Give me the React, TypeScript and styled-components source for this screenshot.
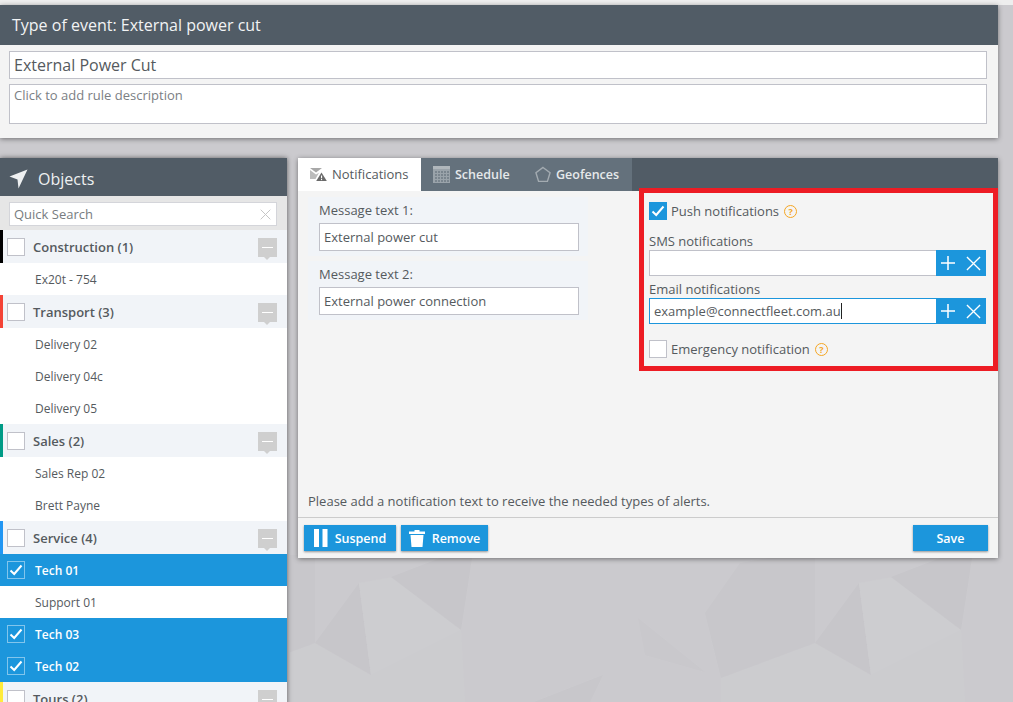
import React from 'react';
import styled, { createGlobalStyle } from 'styled-components';

const blue = '#1c96dc';
const darkHeader = '#515c66';
const textGray = '#555a5e';
const fieldBorder = '#c0c1c9';

const GlobalStyle = createGlobalStyle`
  html, body {
    margin: 0;
    height: 100%;
    overflow: hidden;
    background: #cbcace;
    font-family: "Open Sans", "Liberation Sans", sans-serif;
    color: ${textGray};
  }
  * {
    box-sizing: border-box;
  }
`;

const Page = styled.div`
  position: relative;
  display: flex;
  flex-direction: column;
  height: 702px;
  overflow: hidden;
`;

const Backdrop = styled.svg`
  position: absolute;
  left: 0;
  top: 0;
  width: 100%;
  height: 100%;
`;

const TopStrip = styled.div`
  position: relative;
  height: 5px;
  flex: none;
  background: #eeeeee;
`;

const EventCard = styled.section`
  position: relative;
  flex: none;
  width: 998px;
  background: #f4f4f4;
  box-shadow: 0 1px 5px rgba(0, 0, 0, 0.45);
`;

const EventHeader = styled.h1`
  margin: 0;
  height: 40px;
  padding: 0 12px;
  display: flex;
  align-items: center;
  background: ${darkHeader};
  color: #f1f3f4;
  font-size: 16px;
  font-weight: 400;
`;

const EventFields = styled.div`
  display: flex;
  flex-direction: column;
  gap: 5px;
  padding: 6px 11px 14px 9px;
`;

const TitleInput = styled.input`
  height: 28px;
  padding: 0 4px;
  border: 1px solid ${fieldBorder};
  background: #fff;
  color: ${textGray};
  font: 16px "Open Sans", sans-serif;
  outline: none;
`;

const DescriptionArea = styled.div`
  height: 40px;
  padding: 1px 4px;
  border: 1px solid ${fieldBorder};
  background: #fff;
  color: #7b8084;
  font-size: 13px;
  line-height: 18px;
`;

const Main = styled.div`
  position: relative;
  flex: 1;
  min-height: 0;
  display: flex;
  align-items: flex-start;
  gap: 11px;
  margin-top: 20px;
`;

const ObjectsPanel = styled.aside`
  flex: none;
  width: 287px;
  height: 560px;
  background: #fff;
  box-shadow: 0 0 5px rgba(0, 0, 0, 0.55);
  overflow: hidden;
`;

const ObjectsHeader = styled.div`
  height: 38px;
  display: flex;
  align-items: center;
  gap: 10px;
  padding: 3px 0 0 9px;
  background: ${darkHeader};
  color: #eef0f1;
  font-size: 16px;
  font-weight: 400;
`;

const SearchBar = styled.div`
  height: 34px;
  padding: 6px 10px 4px 9px;
  background: #e6e6e6;
`;

const SearchBox = styled.div`
  height: 24px;
  padding: 0 5px 0 4px;
  display: flex;
  align-items: center;
  justify-content: space-between;
  border: 1px solid #d4d5da;
  background: #fff;
  color: #777c80;
  font-size: 13px;
`;

const GroupRow = styled.div<{ $color: string }>`
  height: 33px;
  display: flex;
  align-items: center;
  gap: 8px;
  padding: 1px 10px 0 4px;
  border-left: 3px solid ${(props) => props.$color};
  background: #f1f4f8;
  font-size: 13px;
  font-weight: 600;
`;

const GroupName = styled.span`
  flex: 1;
`;

const CollapseButton = styled.span`
  position: relative;
  width: 19px;
  height: 19px;
  background: #cfcfcf;
  &::before {
    content: '';
    position: absolute;
    left: 4px;
    right: 4px;
    top: 9px;
    height: 1px;
    background: #fff;
  }
  &::after {
    content: '';
    position: absolute;
    left: 6px;
    top: 19px;
    border: 3.5px solid transparent;
    border-top-color: #cfcfcf;
    border-bottom: 0;
  }
`;

const ItemRow = styled.div<{ $selected?: boolean }>`
  height: 32px;
  display: flex;
  align-items: center;
  gap: 10px;
  padding-left: 7px;
  background: ${(props) => (props.$selected ? blue : '#fff')};
  color: ${(props) => (props.$selected ? '#fff' : textGray)};
  font-size: 12px;
  font-weight: ${(props) => (props.$selected ? 600 : 400)};
`;

const ItemSpacer = styled.span`
  width: 18px;
`;

const CheckBox = styled.span<{ $checked?: boolean; $onBlue?: boolean }>`
  flex: none;
  width: 18px;
  height: 18px;
  display: flex;
  align-items: center;
  justify-content: center;
  border: 1px solid ${(props) => (props.$onBlue ? 'rgba(255, 255, 255, 0.45)' : props.$checked ? blue : fieldBorder)};
  background: ${(props) => (props.$onBlue ? 'transparent' : props.$checked ? blue : '#fff')};
`;

const RulePanel = styled.section`
  flex: none;
  width: 700px;
  height: 400px;
  display: flex;
  flex-direction: column;
  background: #f4f4f4;
  box-shadow: 0 1px 5px rgba(0, 0, 0, 0.45);
`;

const TabBar = styled.div`
  flex: none;
  height: 33px;
  display: flex;
  background: ${darkHeader};
`;

const Tab = styled.div<{ $active?: boolean; $width: number }>`
  width: ${(props) => props.$width}px;
  display: flex;
  align-items: center;
  gap: 5px;
  padding: 0 0 ${(props) => (props.$active ? 1 : 0)}px 12px;
  background: ${(props) => (props.$active ? '#fff' : '#64717c')};
  color: ${(props) => (props.$active ? textGray : '#e6e9eb')};
  font-size: ${(props) => (props.$active ? 13 : 12.5)}px;
  font-weight: ${(props) => (props.$active ? 400 : 600)};
`;

const Content = styled.div`
  flex: 1;
  min-height: 0;
  display: flex;
`;

const MessageColumn = styled.div`
  flex: none;
  width: 341px;
  display: flex;
  flex-direction: column;
  gap: 5px;
  padding: 6px 0 0 10px;
`;

const MessageBlock = styled.div`
  width: 280px;
  padding: 4px 9px 5px 11px;
  background: #f1f4f8;
`;

const FieldLabel = styled.label`
  display: block;
  font-size: 13px;
  line-height: 18px;
`;

const MessageLabel = styled(FieldLabel)`
  margin-bottom: 4px;
`;

const MessageInput = styled.input`
  display: block;
  width: 100%;
  height: 28px;
  padding: 0 4px;
  border: 1px solid ${fieldBorder};
  background: #fff;
  color: ${textGray};
  font: 13px "Open Sans", sans-serif;
  outline: none;
`;

const HighlightBox = styled.div`
  flex: none;
  width: 359px;
  height: 183px;
  margin-top: -3px;
  padding: 9px 7px 0 5px;
  border: 5px solid #ed1c24;
`;

const CheckRow = styled.div<{ $top?: number }>`
  height: 18px;
  margin-top: ${(props) => props.$top ?? 0}px;
  display: flex;
  align-items: center;
  gap: 4px;
  font-size: 13px;
`;

const HelpMark = styled.span`
  width: 13px;
  height: 13px;
  margin-left: 1px;
  display: flex;
  align-items: center;
  justify-content: center;
  border: 1.5px solid #f5a623;
  border-radius: 50%;
  color: #f5a623;
  font-size: 9px;
  font-weight: 700;
`;

const NotifyLabel = styled(FieldLabel)<{ $top: number }>`
  margin-top: ${(props) => props.$top}px;
`;

const NotifyField = styled.div`
  height: 26px;
  display: flex;
`;

const NotifyText = styled.div<{ $focused?: boolean }>`
  flex: 1;
  display: flex;
  align-items: center;
  padding: 0 4px;
  border: 1px solid ${(props) => (props.$focused ? blue : fieldBorder)};
  border-right: 0;
  background: #fff;
  color: ${textGray};
  font-size: 13px;
`;

const Caret = styled.span`
  width: 1px;
  height: 16px;
  background: #222;
`;

const FieldActions = styled.div`
  flex: none;
  width: 50px;
  display: flex;
  align-items: center;
  gap: 10px;
  padding-left: 4px;
  background: ${blue};
`;

const Note = styled.p`
  flex: none;
  margin: 0 0 7px;
  padding-left: 10px;
  font-size: 13px;
  line-height: 18px;
`;

const Footer = styled.footer`
  flex: none;
  height: 41px;
  display: flex;
  align-items: center;
  gap: 5px;
  padding: 0 10px 0 6px;
  border-top: 1px solid #cccccc;
`;

const ActionButton = styled.button<{ $push?: boolean; $width: number }>`
  width: ${(props) => props.$width}px;
  height: 26px;
  margin-left: ${(props) => (props.$push ? 'auto' : 0)};
  display: flex;
  align-items: center;
  justify-content: center;
  gap: 7px;
  padding: 0;
  border: 0;
  background: ${blue};
  box-shadow: 0 1px 2px rgba(0, 0, 0, 0.4);
  color: #fff;
  font: 600 12.5px "Open Sans", sans-serif;
`;

const Check = ({ size = 14 }: { size?: number }) => (
  <svg width={size} height={size} viewBox="0 0 14 14" fill="none">
    <path d="M1.5 7.5 L5.2 11 L12.5 2.5" stroke="#fff" strokeWidth="2" />
  </svg>
);

const Cross = ({ size, color }: { size: number; color: string }) => (
  <svg width={size} height={size} viewBox="0 0 16 16" fill="none">
    <path d="M1 1 L15 15 M15 1 L1 15" stroke={color} strokeWidth="1.4" />
  </svg>
);

const Plus = () => (
  <svg width="16" height="16" viewBox="0 0 16 16" fill="none">
    <path d="M8 1 V15 M1 8 H15" stroke="#fff" strokeWidth="1.5" />
  </svg>
);

const NavArrow = () => (
  <svg width="19" height="20" viewBox="0 0 19 20">
    <path d="M18.5 0.5 L0.5 7.5 L8.5 10.5 L9.5 19.5 Z" fill="#eef0f1" />
  </svg>
);

const NotificationIcon = () => (
  <svg width="17" height="13" viewBox="0 0 17 13">
    <path d="M0 0 H12 L6 4.5 Z" fill="#a8a8a8" />
    <path d="M0 2 L6 6.5 L9 4.8 L5.5 11 H0 Z" fill="#bcbcbc" />
    <path d="M11.5 4.5 L16.8 13 H6.2 Z" fill="#6a6a6a" />
    <rect x="11" y="7.5" width="1.1" height="2.8" fill="#fff" />
    <rect x="11" y="11" width="1.1" height="1.1" fill="#fff" />
  </svg>
);

const CalendarIcon = () => (
  <svg width="17" height="17" viewBox="0 0 17 17">
    <rect width="17" height="17" fill="#9aa3aa" />
    <rect y="0" width="17" height="3" fill="#b0b7bc" />
    {[2, 5, 8, 11, 14].map((x) =>
      [5, 8, 11, 14].map((y) => <rect key={`${x}-${y}`} x={x} y={y} width="2" height="2" fill="#7a858e" />)
    )}
  </svg>
);

const PentagonIcon = () => (
  <svg width="16" height="17" viewBox="0 0 17 17" fill="none">
    <path d="M8.5 1 L16 6.6 L13.2 15.8 H3.8 L1 6.6 Z" stroke="#a3abb1" strokeWidth="1.5" />
  </svg>
);

const PauseIcon = () => (
  <svg width="14" height="18" viewBox="0 0 14 18">
    <rect x="0" width="5" height="18" fill="#fff" />
    <rect x="8.5" width="5" height="18" fill="#fff" />
  </svg>
);

const TrashIcon = () => (
  <svg width="16" height="17" viewBox="0 0 16 17">
    <path d="M5.5 1.5 V0 H10.5 V1.5 H16 V4 H0 V1.5 Z" fill="#fff" />
    <path d="M1.5 5 H14.5 L13.5 17 H2.5 Z" fill="#fff" />
  </svg>
);

interface ObjectGroup {
  name: string;
  color: string;
  items: { label: string; selected?: boolean }[];
}

const groups: ObjectGroup[] = [
  { name: 'Construction (1)', color: '#000000', items: [{ label: 'Ex20t - 754' }] },
  { name: 'Transport (3)', color: '#f44336', items: [{ label: 'Delivery 02' }, { label: 'Delivery 04c' }, { label: 'Delivery 05' }] },
  { name: 'Sales (2)', color: '#009b86', items: [{ label: 'Sales Rep 02' }, { label: 'Brett Payne' }] },
  {
    name: 'Service (4)',
    color: '#2196f3',
    items: [
      { label: 'Tech 01', selected: true },
      { label: 'Support 01' },
      { label: 'Tech 03', selected: true },
      { label: 'Tech 02', selected: true },
    ],
  },
  { name: 'Tours (2)', color: '#ffeb3b', items: [] },
];

const App: React.FC = () => (
  <Page>
    <GlobalStyle />
    <Backdrop viewBox="0 0 1013 702" preserveAspectRatio="none">
      <defs>
        <pattern id="facets" x="315" y="500" width="500" height="300" patternUnits="userSpaceOnUse">
          <path d="M0 143 L56 175 L146 130 L150 202 H0 Z" fill="#cccccf" />
          <path d="M406 178 L500 143 V202 H406 Z" fill="#cccccf" />
          <path d="M0 143 L44 83 L56 175 Z" fill="#c7c6ca" />
          <path d="M44 83 L79 77 L146 130 L56 175 Z" fill="#cdcdd0" />
          <path d="M76 77 L159 45 L146 130 Z" fill="#c7c6ca" />
          <path d="M390 113 L425 63 L500 50 V143 L406 178 Z" fill="#c8c7cb" />
          <path d="M323 118 L390 172 L330 155 Z" fill="#c9c8cc" />
          <path d="M288 175 L219 202 L275 202 Z" fill="#c8c7cb" />
        </pattern>
      </defs>
      <rect x="290" y="555" width="723" height="147" fill="url(#facets)" />
    </Backdrop>
    <TopStrip />
    <EventCard>
      <EventHeader>Type of event: External power cut</EventHeader>
      <EventFields>
        <TitleInput defaultValue="External Power Cut" />
        <DescriptionArea>Click to add rule description</DescriptionArea>
      </EventFields>
    </EventCard>
    <Main>
      <ObjectsPanel>
        <ObjectsHeader>
          <NavArrow />
          Objects
        </ObjectsHeader>
        <SearchBar>
          <SearchBox>
            Quick Search
            <Cross size={11} color="#c4c4c4" />
          </SearchBox>
        </SearchBar>
        {groups.map((group) => (
          <React.Fragment key={group.name}>
            <GroupRow $color={group.color}>
              <CheckBox />
              <GroupName>{group.name}</GroupName>
              <CollapseButton />
            </GroupRow>
            {group.items.map((item) => (
              <ItemRow key={item.label} $selected={item.selected}>
                {item.selected ? (
                  <CheckBox $checked $onBlue>
                    <Check />
                  </CheckBox>
                ) : (
                  <ItemSpacer />
                )}
                {item.label}
              </ItemRow>
            ))}
          </React.Fragment>
        ))}
      </ObjectsPanel>
      <RulePanel>
        <TabBar>
          <Tab $active $width={123}>
            <NotificationIcon />
            Notifications
          </Tab>
          <Tab $width={102}>
            <CalendarIcon />
            Schedule
          </Tab>
          <Tab $width={109}>
            <PentagonIcon />
            Geofences
          </Tab>
        </TabBar>
        <Content>
          <MessageColumn>
            <MessageBlock>
              <MessageLabel>Message text 1:</MessageLabel>
              <MessageInput defaultValue="External power cut" />
            </MessageBlock>
            <MessageBlock>
              <MessageLabel>Message text 2:</MessageLabel>
              <MessageInput defaultValue="External power connection" />
            </MessageBlock>
          </MessageColumn>
          <HighlightBox>
            <CheckRow>
              <CheckBox $checked>
                <Check />
              </CheckBox>
              Push notifications
              <HelpMark>?</HelpMark>
            </CheckRow>
            <NotifyLabel $top={12}>SMS notifications</NotifyLabel>
            <NotifyField>
              <NotifyText />
              <FieldActions>
                <Plus />
                <Cross size={15} color="#fff" />
              </FieldActions>
            </NotifyField>
            <NotifyLabel $top={4}>Email notifications</NotifyLabel>
            <NotifyField>
              <NotifyText $focused>
                example@connectfleet.com.au
                <Caret />
              </NotifyText>
              <FieldActions>
                <Plus />
                <Cross size={15} color="#fff" />
              </FieldActions>
            </NotifyField>
            <CheckRow $top={16}>
              <CheckBox />
              Emergency notification
              <HelpMark>?</HelpMark>
            </CheckRow>
          </HighlightBox>
        </Content>
        <Note>Please add a notification text to receive the needed types of alerts.</Note>
        <Footer>
          <ActionButton $width={92}>
            <PauseIcon />
            Suspend
          </ActionButton>
          <ActionButton $width={87}>
            <TrashIcon />
            Remove
          </ActionButton>
          <ActionButton $push $width={75}>
            Save
          </ActionButton>
        </Footer>
      </RulePanel>
    </Main>
  </Page>
);

export default App;
